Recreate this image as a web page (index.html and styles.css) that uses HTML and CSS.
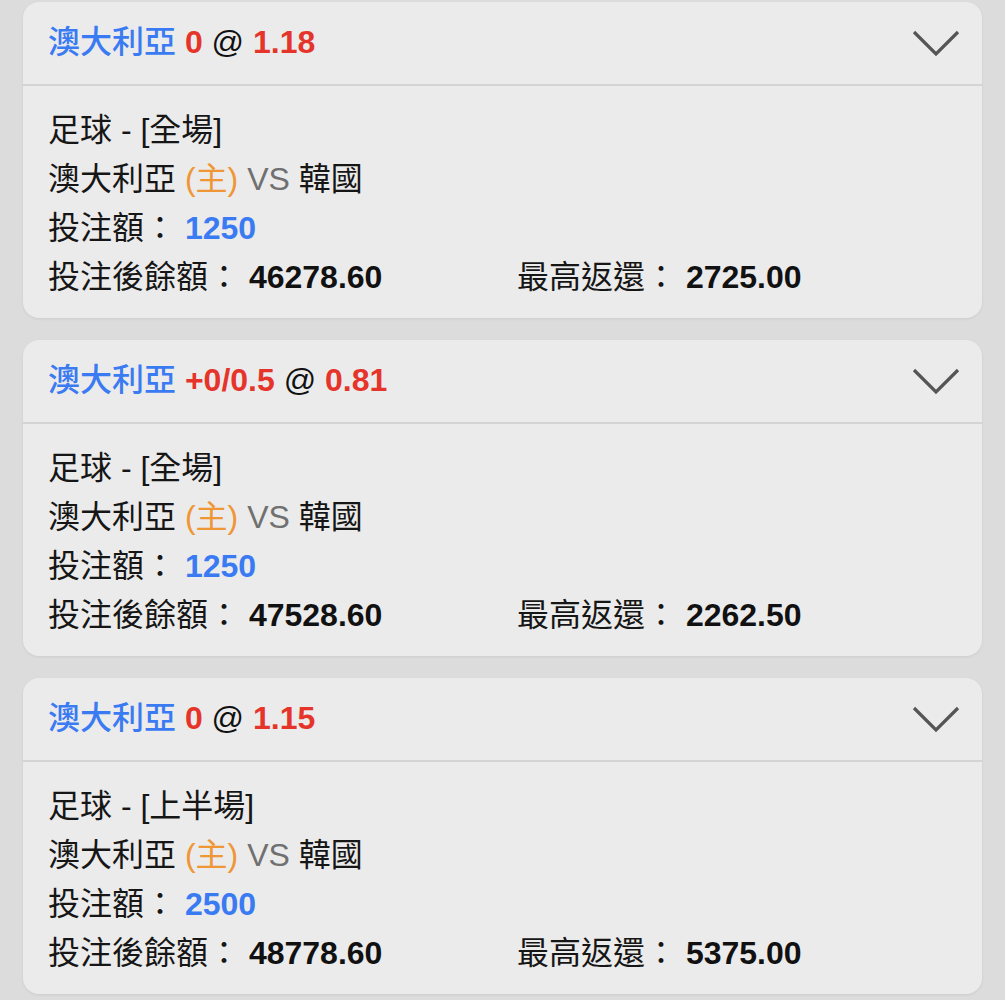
FILE: index.html
```html
<!DOCTYPE html>
<html lang="zh-Hant">
<head>
<meta charset="utf-8">
<link rel="stylesheet" href="styles.css">
</head>
<body>
<div class="list">
  <div class="card">
    <div class="card-head">
      <div class="title"><span class="team">澳大利亞</span> <span class="red">0</span> <span class="at">@</span> <span class="red">1.18</span></div>
      <svg class="chev" width="48" height="28" viewBox="0 0 48 28"><polyline points="2,3 24,25 46,3" fill="none" stroke="#555" stroke-width="3.2"/></svg>
    </div>
    <div class="card-body">
      <div class="line">足球 - [全場]</div>
      <div class="line">澳大利亞 <span class="home">(主)</span> <span class="vs">VS</span> 韓國</div>
      <div class="line">投注額： <span class="amt">1250</span></div>
      <div class="row">
        <div class="line">投注後餘額： <b class="num">46278.60</b></div>
        <div class="line">最高返還： <b class="num">2725.00</b></div>
      </div>
    </div>
  </div>
  <div class="card">
    <div class="card-head">
      <div class="title"><span class="team">澳大利亞</span> <span class="red">+0/0.5</span> <span class="at">@</span> <span class="red">0.81</span></div>
      <svg class="chev" width="48" height="28" viewBox="0 0 48 28"><polyline points="2,3 24,25 46,3" fill="none" stroke="#555" stroke-width="3.2"/></svg>
    </div>
    <div class="card-body">
      <div class="line">足球 - [全場]</div>
      <div class="line">澳大利亞 <span class="home">(主)</span> <span class="vs">VS</span> 韓國</div>
      <div class="line">投注額： <span class="amt">1250</span></div>
      <div class="row">
        <div class="line">投注後餘額： <b class="num">47528.60</b></div>
        <div class="line">最高返還： <b class="num">2262.50</b></div>
      </div>
    </div>
  </div>
  <div class="card">
    <div class="card-head">
      <div class="title"><span class="team">澳大利亞</span> <span class="red">0</span> <span class="at">@</span> <span class="red">1.15</span></div>
      <svg class="chev" width="48" height="28" viewBox="0 0 48 28"><polyline points="2,3 24,25 46,3" fill="none" stroke="#555" stroke-width="3.2"/></svg>
    </div>
    <div class="card-body">
      <div class="line">足球 - [上半場]</div>
      <div class="line">澳大利亞 <span class="home">(主)</span> <span class="vs">VS</span> 韓國</div>
      <div class="line">投注額： <span class="amt">2500</span></div>
      <div class="row">
        <div class="line">投注後餘額： <b class="num">48778.60</b></div>
        <div class="line">最高返還： <b class="num">5375.00</b></div>
      </div>
    </div>
  </div>
</div>
</body>
</html>
```
FILE: styles.css
```css
html, body {
  margin: 0;
  padding: 0;
  background: #dcdcdc;
}
body {
  font-family: "Liberation Sans", "Noto Sans CJK TC", sans-serif;
  color: #161616;
  width: 1005px;
  height: 1000px;
  overflow: hidden;
}
.list {
  display: flex;
  flex-direction: column;
  gap: 22px;
  padding: 2px 23px 0 23px;
}
.card {
  background: #ebebeb;
  border-radius: 16px;
  box-shadow: 0 1px 3px rgba(0,0,0,0.07);
  overflow: hidden;
}
.card-head {
  height: 82px;
  display: flex;
  align-items: center;
  justify-content: space-between;
  padding: 0 22px 0 25px;
  border-bottom: 2px solid #d4d4d4;
}
.title {
  font-size: 32px;
  line-height: 40px;
  white-space: pre;
  margin-top: -3px;
}
.team {
  color: #3a7af2;
  font-weight: 500;
}
.red {
  color: #e5352b;
  font-weight: bold;
}
.at {
  color: #111;
}
.card-body {
  padding: 20px 25px 16px 25px;
}
.line {
  font-size: 32px;
  line-height: 49px;
  height: 49px;
  white-space: pre;
}
.home {
  color: #ef9636;
}
.vs {
  color: #707070;
}
.amt {
  color: #3a7af2;
  font-weight: bold;
}
.num {
  font-weight: bold;
  color: #111;
}
.row {
  display: grid;
  grid-template-columns: 469px auto;
}
```
